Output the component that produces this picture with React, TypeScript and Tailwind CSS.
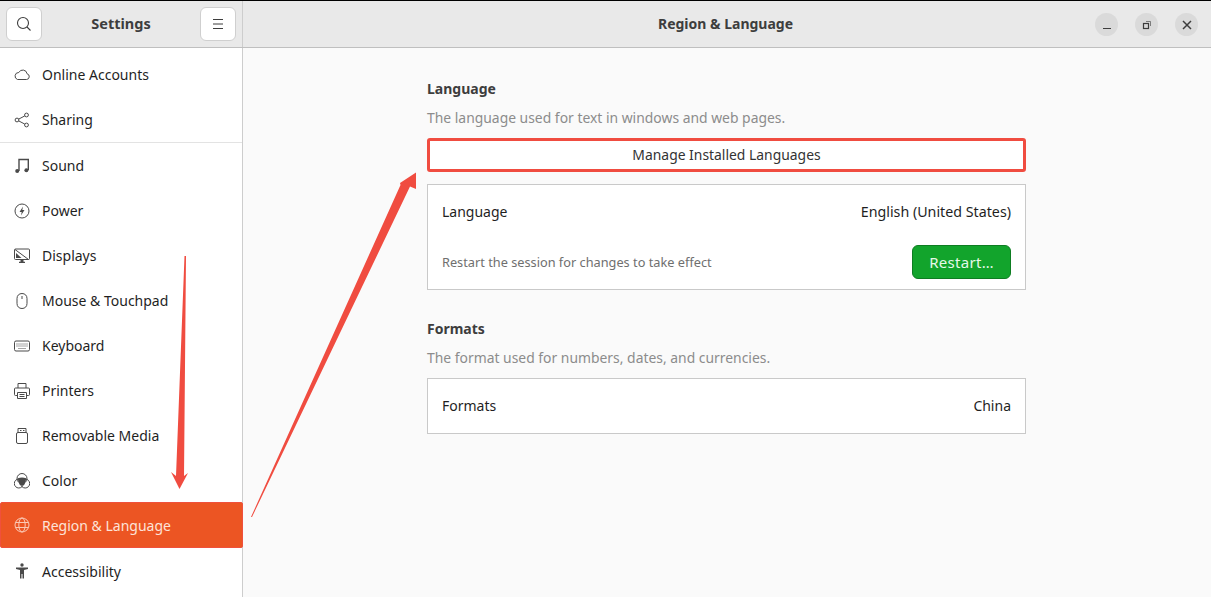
import React from 'react';

const iconClass = 'w-4 h-4 shrink-0';

const CloudIcon = () => (
  <svg viewBox="0 0 16 16" className={iconClass} fill="none" stroke="currentColor" strokeWidth="1">
    <path d="M3.500 12.500h9a2.900 2.900 0 0 0 .6-5.700A4.400 4.400 0 0 0 4.800 5.500 3.600 3.600 0 0 0 3.500 12.500z" />
  </svg>
);

const ShareIcon = () => (
  <svg viewBox="0 0 16 16" className={iconClass} fill="none" stroke="currentColor" strokeWidth="1">
    <circle cx="3" cy="8" r="1.900" />
    <circle cx="12.500" cy="3" r="1.900" />
    <circle cx="12.500" cy="13" r="1.900" />
    <path d="M4.700 7.100l6.100-3.200M4.700 8.900l6.100 3.200" />
  </svg>
);

const MusicIcon = () => (
  <svg viewBox="0 0 16 16" className={iconClass} fill="none" stroke="currentColor" strokeWidth="1.400">
    <path d="M5 13V1.500h9.300v10.500" />
    <circle cx="3.200" cy="13" r="2" fill="currentColor" stroke="none" />
    <circle cx="12.400" cy="12.200" r="2" fill="currentColor" stroke="none" />
  </svg>
);

const PowerIcon = () => (
  <svg viewBox="0 0 16 16" className={iconClass} fill="none" stroke="currentColor" strokeWidth="1">
    <circle cx="8" cy="8" r="7" />
    <path d="M9 3.500L5.500 9h2.200L7 12.500 10.500 7H8.300z" fill="currentColor" stroke="none" />
  </svg>
);

const DisplayIcon = () => (
  <svg viewBox="0 0 16 16" className={iconClass} fill="none" stroke="currentColor" strokeWidth="1">
    <rect x="0.500" y="1" width="15" height="10.500" rx="1" />
    <path d="M1 1.500l13.500 10" />
    <path d="M2 5l5.500 5H2z" fill="currentColor" stroke="none" />
    <path d="M5 15h6v-1.200H9.500v-2h-3v2H5z" fill="currentColor" stroke="none" />
  </svg>
);

const MouseIcon = () => (
  <svg viewBox="0 0 16 16" className={iconClass} fill="none" stroke="currentColor" strokeWidth="1">
    <path d="M3 5.500C3 2.500 5 .5 8 .5s5 2 5 5v5c0 3-2 5-5 5s-5-2-5-5z" />
    <path d="M8 3v3" />
  </svg>
);

const KeyboardIcon = () => (
  <svg viewBox="0 0 16 16" className={iconClass} fill="none" stroke="currentColor" strokeWidth="1">
    <rect x="0.500" y="3" width="15" height="10" rx="1.500" />
    <path d="M2.500 6h11M2.500 8h11M4.500 10.500h7" strokeDasharray="1 1" />
  </svg>
);

const PrinterIcon = () => (
  <svg viewBox="0 0 16 16" className={iconClass} fill="none" stroke="currentColor" strokeWidth="1">
    <path d="M4 5V.5h8V5" />
    <path d="M3.500 12.500H1.500a1 1 0 0 1-1-1V6a1 1 0 0 1 1-1h13a1 1 0 0 1 1 1v5.500a1 1 0 0 1-1 1h-2" />
    <path d="M3.500 9.500h9v6h-9zM5.500 11.500h5M5.500 13.500h5" />
  </svg>
);

const UsbIcon = () => (
  <svg viewBox="0 0 16 16" className={iconClass} fill="none" stroke="currentColor" strokeWidth="1">
    <rect x="2.500" y="4.500" width="11" height="11" rx="1.500" />
    <path d="M4 4.500V.5h8v4" />
    <path d="M6 2.500h1.500M9 2.500h1.500" />
  </svg>
);

const ColorIcon = () => (
  <svg viewBox="0 0 16 16" className={iconClass} fill="none" stroke="currentColor" strokeWidth="1">
    <circle cx="8" cy="5.500" r="5" />
    <circle cx="4.800" cy="10.500" r="4.500" />
    <circle cx="11.200" cy="10.500" r="4.500" />
    <path d="M3.500 5.500q4.500-2 9 0l-2 6q-2.500 2-5 0z" fill="currentColor" stroke="none" />
  </svg>
);

const GlobeIcon = () => (
  <svg viewBox="0 0 16 16" className={iconClass} fill="none" stroke="currentColor" strokeWidth="1">
    <circle cx="8" cy="8" r="7" />
    <ellipse cx="8" cy="8" rx="3.200" ry="7" />
    <path d="M1.500 5.500h13M1.500 10.500h13" />
  </svg>
);

const AccessibilityIcon = () => (
  <svg viewBox="0 0 16 16" className={iconClass} fill="currentColor">
    <circle cx="8" cy="2" r="1.700" />
    <path d="M2 4.500h12v1.500l-4 1v8.500H8.500V11h-1v4.500H6V7L2 6z" />
  </svg>
);

const rows = [
  { label: 'Online Accounts', icon: <CloudIcon /> },
  { label: 'Sharing', icon: <ShareIcon />, divider: true },
  { label: 'Sound', icon: <MusicIcon /> },
  { label: 'Power', icon: <PowerIcon /> },
  { label: 'Displays', icon: <DisplayIcon /> },
  { label: 'Mouse & Touchpad', icon: <MouseIcon /> },
  { label: 'Keyboard', icon: <KeyboardIcon /> },
  { label: 'Printers', icon: <PrinterIcon /> },
  { label: 'Removable Media', icon: <UsbIcon /> },
  { label: 'Color', icon: <ColorIcon /> },
  { label: 'Region & Language', icon: <GlobeIcon />, active: true },
  { label: 'Accessibility', icon: <AccessibilityIcon />, last: true },
];

const App: React.FC = () => {
  return (
    <div className="relative w-[1211px] h-[597px] overflow-hidden flex flex-col bg-[#fafafa] text-[14px] text-[#1f1f1f] font-['Noto_Sans',sans-serif]">
      <div className="h-px bg-black shrink-0" />

      {/* Header */}
      <div className="flex h-[47px] shrink-0 bg-[#e9e9e9] border-b border-[#bfbfbf]">
        <div className="w-[242px] shrink-0 flex items-center justify-between px-[6px] pb-[1px]">
          <button className="w-[36px] h-[34px] flex items-center justify-center bg-white border border-[#cfcfcf] rounded-[6px] text-[#3d3d3d]">
            <svg viewBox="0 0 16 16" className="w-4 h-4" fill="none" stroke="currentColor" strokeWidth="1.100">
              <circle cx="7" cy="7" r="5.500" />
              <path d="M11 11l3.500 3.500" />
            </svg>
          </button>
          <span className="font-bold text-[14.5px] text-[#3d3d3d]">Settings</span>
          <button className="w-[36px] h-[34px] flex items-center justify-center bg-white border border-[#cfcfcf] rounded-[6px] text-[#3d3d3d]">
            <svg viewBox="0 0 16 16" className="w-4 h-4" fill="none" stroke="currentColor" strokeWidth="1">
              <path d="M3 3.500h10M3 8h10M3 12.500h10" />
            </svg>
          </button>
        </div>
        <div className="w-px bg-[#cdcdcd] shrink-0" />
        <div className="relative flex-1 flex items-center justify-center pb-[1px] pr-[3px]">
          <span className="font-bold text-[#3d3d3d]">Region &amp; Language</span>
          <div className="absolute right-[13px] top-[12px] flex gap-[17px] text-[#3d3d3d]">
            <div className="w-[23px] h-[23px] rounded-full bg-[#dadada] flex items-center justify-center">
              <svg viewBox="0 0 16 16" className="w-4 h-4" fill="none" stroke="currentColor" strokeWidth="1">
                <path d="M4 11.500h8" />
              </svg>
            </div>
            <div className="w-[23px] h-[23px] rounded-full bg-[#dadada] flex items-center justify-center">
              <svg viewBox="0 0 16 16" className="w-4 h-4" fill="none" stroke="currentColor" strokeWidth="1">
                <rect x="4.500" y="6.500" width="5" height="5" strokeWidth="1.200" />
                <path d="M7 4.500h4.500V9" strokeOpacity="0.600" />
              </svg>
            </div>
            <div className="w-[23px] h-[23px] rounded-full bg-[#dadada] flex items-center justify-center">
              <svg viewBox="0 0 16 16" className="w-4 h-4" fill="none" stroke="currentColor" strokeWidth="1.500">
                <path d="M4 4l8 8M12 4l-8 8" />
              </svg>
            </div>
          </div>
        </div>
      </div>

      <div className="flex flex-1 min-h-0">
        {/* Sidebar */}
        <div className="relative w-[242px] shrink-0 bg-white pt-1">
          {rows.map((row) => (
            <React.Fragment key={row.label}>
              {row.active ? (
                <div className="relative w-[243px] h-[46px] -mt-px flex items-center gap-[12px] pl-[14px] bg-[#ec5523] border border-[#f0503c] rounded-[2px] text-[#fde3d8]">
                  <span className="-ml-px text-[#fbc9b5]">{row.icon}</span>
                  <span>{row.label}</span>
                </div>
              ) : (
                <div className={row.last ? 'h-[45px] pt-px flex items-center gap-[12px] pl-[14px]' : 'h-[45px] flex items-center gap-[12px] pl-[14px]'}>
                  <span className="text-[#4a4a4a]">{row.icon}</span>
                  <span>{row.label}</span>
                </div>
              )}
              {row.divider && <div className="h-px bg-[#e3e3e3]" />}
            </React.Fragment>
          ))}
        </div>
        <div className="w-px bg-[#cdcdcd] shrink-0" />

        {/* Content */}
        <div className="flex-1 pl-[184px]">
          <div className="w-[599px]">
            <h2 className="mt-[30px] h-[22px] leading-[22px] font-bold text-[#3d3d3d]">Language</h2>
            <p className="mt-[8px] h-[20px] leading-[20px] text-[13.9px] text-[#8c8c8c]">The language used for text in windows and web pages.</p>
            <button className="mt-[10px] w-full h-[34px] flex items-center justify-center bg-white border-[3px] border-[#f04c40] rounded-[3px] text-[13.9px] text-[#333]">
              Manage Installed Languages
            </button>
            <div className="mt-[12px] bg-white border border-[#c9c9c9] h-[106px] px-[14px]">
              <div className="flex items-center justify-between h-[55px] pb-[2px]">
                <span>Language</span>
                <span className="text-[14.25px]">English (United States)</span>
              </div>
              <div className="flex items-center justify-between h-[44px]">
                <span className="pt-[2px] text-[12.75px] text-[#6f6f6f]">Restart the session for changes to take effect</span>
                <button className="w-[99px] h-[34px] rounded-[6px] bg-[#12a42c] border border-[#0e7d22] text-[15px] tracking-[0.3px] text-[#e6f8e8]">Restart…</button>
              </div>
            </div>
            <h2 className="mt-[28px] h-[22px] leading-[22px] font-bold text-[#3d3d3d]">Formats</h2>
            <p className="mt-[8px] h-[20px] leading-[20px] text-[13.9px] text-[#8c8c8c]">The format used for numbers, dates, and currencies.</p>
            <div className="mt-[10px] bg-white border border-[#c9c9c9] h-[56px] pb-[2px] px-[14px] flex items-center justify-between">
              <span>Formats</span>
              <span>China</span>
            </div>
          </div>
        </div>
      </div>

      {/* Annotation arrows */}
      <svg className="absolute inset-0 pointer-events-none" width="1211" height="597" viewBox="0 0 1211 597">
        <path d="M184.500 256L186 256L184 476L188 473L179.500 489L171 472L176 476Z" fill="#f04c40" />
        <path d="M251 517L400.500 185L400 183L416 172.500L416 189L410 186.500L252 517Z" fill="#f04c40" />
      </svg>
    </div>
  );
};

export default App;
